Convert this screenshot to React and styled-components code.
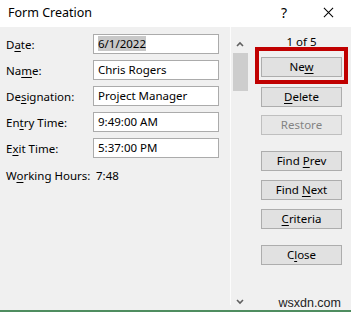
import React from "react";
import styled, { createGlobalStyle } from "styled-components";

const GlobalStyle = createGlobalStyle`
  html, body {
    margin: 0;
    padding: 0;
    background: #f0f0f0;
  }
  body {
    font-family: "Noto Sans", "Open Sans", sans-serif;
    color: #000;
  }
`;

const fields = [
  { label: ["D", "a", "te:"], value: "6/1/2022", selected: true },
  { label: ["Na", "m", "e:"], value: "Chris Rogers" },
  { label: ["De", "s", "ignation:"], value: "Project Manager" },
  { label: ["En", "t", "ry Time:"], value: "9:49:00 AM" },
  { label: ["E", "x", "it Time:"], value: "5:37:00 PM" },
];

const buttons = [
  { text: ["", "D", "elete"], top: 3 },
  { text: ["Restore", "", ""], top: 8, disabled: true },
  { text: ["Find ", "P", "rev"], top: 16 },
  { text: ["Find ", "N", "ext"], top: 9 },
  { text: ["", "C", "riteria"], top: 9 },
  { text: ["C", "l", "ose"], top: 16 },
];

// label with one underlined access key
const Keyed = ({ parts }) => (
  <>
    {parts[0]}
    {parts[1] && <u>{parts[1]}</u>}
    {parts[2]}
  </>
);

const App = () => {
  return (
    <>
      <GlobalStyle />
      <Window>
        <TitleBar>
          <Title>Form Creation</Title>
          <Help>?</Help>
          <CloseIcon viewBox="0 0 12 12">
            <path d="M1 1 L11 11 M11 1 L1 11" stroke="#000" strokeWidth="1.1" />
          </CloseIcon>
        </TitleBar>
        <Body>
          <FormPanel>
            {fields.map((f) => (
              <Row key={f.value}>
                <Label>
                  <Keyed parts={f.label} />
                </Label>
                <Field>
                  {f.selected ? <Selected>{f.value}</Selected> : f.value}
                </Field>
              </Row>
            ))}
            <HoursRow>
              <Label>
                W<u>o</u>rking Hours:
              </Label>
              <Hours>7:48</Hours>
            </HoursRow>
          </FormPanel>
          <ScrollBar>
            <Arrow viewBox="0 0 8 6">
              <path d="M1 5 L4 2 L7 5" stroke="#606060" strokeWidth="1.6" fill="none" />
            </Arrow>
            <Thumb />
            <Track />
            <Arrow viewBox="0 0 8 6">
              <path d="M1 1 L4 4 L7 1" stroke="#606060" strokeWidth="1.6" fill="none" />
            </Arrow>
          </ScrollBar>
          <ButtonPanel>
            <Counter>1 of 5</Counter>
            <Highlight>
              <Button>
                Ne<u>w</u>
              </Button>
            </Highlight>
            {buttons.map((b) => (
              <Button key={b.text.join("")} $top={b.top} disabled={b.disabled}>
                <Keyed parts={b.text} />
              </Button>
            ))}
            <Watermark>wsxdn.com</Watermark>
          </ButtonPanel>
        </Body>
        <BottomLine />
      </Window>
    </>
  );
};

const Window = styled.div`
  width: 351px;
  height: 312px;
  display: flex;
  flex-direction: column;
  background: #f0f0f0;
  overflow: hidden;
`;

const TitleBar = styled.div`
  height: 27px;
  flex-shrink: 0;
  background: #fff;
  display: flex;
  align-items: center;
  padding: 0 0 3px 8px;
  box-sizing: border-box;
`;

const Title = styled.div`
  flex: 1;
  font-size: 12.5px;
`;

const Help = styled.div`
  font-size: 14px;
  width: 14px;
  margin-right: 28px;
`;

const CloseIcon = styled.svg`
  width: 11px;
  height: 11px;
  margin-right: 17px;
`;

const Body = styled.div`
  flex: 1;
  display: flex;
  min-height: 0;
`;

const FormPanel = styled.div`
  width: 230px;
  flex-shrink: 0;
  padding: 7px 0 0 6px;
  box-sizing: border-box;
  display: flex;
  flex-direction: column;
  gap: 6px;
`;

const Row = styled.div`
  display: flex;
  align-items: center;
  height: 20px;
`;

const Label = styled.div`
  width: 87px;
  font-size: 11.5px;
  white-space: nowrap;
  u {
    text-underline-offset: 2px;
  }
`;

const Field = styled.div`
  width: 126px;
  height: 20px;
  box-sizing: border-box;
  border: 1px solid #ababab;
  background: #fff;
  font-size: 11.5px;
  line-height: 18px;
  padding-left: 4px;
  white-space: nowrap;
`;

const Selected = styled.span`
  background: #c8c8c8;
`;

const HoursRow = styled(Row)`
  margin-top: 1px;
`;

const Hours = styled.div`
  font-size: 11.5px;
  margin-left: 3px;
`;

const ScrollBar = styled.div`
  width: 19px;
  flex-shrink: 0;
  margin-bottom: 5px;
  border-left: 1px solid #fcfcfc;
  display: flex;
  flex-direction: column;
  align-items: center;
  padding-top: 14px;
  box-sizing: border-box;
`;

const Arrow = styled.svg`
  width: 8px;
  height: 6px;
  margin-left: -1px;
`;

const Thumb = styled.div`
  width: 15px;
  height: 38px;
  margin-top: 6px;
  background: #cdcdcd;
`;

const Track = styled.div`
  flex: 1;
`;

const ButtonPanel = styled.div`
  position: relative;
  flex: 1;
  display: flex;
  flex-direction: column;
  align-items: flex-start;
  padding: 8px 0 0 12px;
`;

const Counter = styled.div`
  width: 81px;
  text-align: center;
  font-size: 11.5px;
  line-height: 14px;
`;

const Highlight = styled.div`
  margin: -2px 0 0 -6px;
  border: 4px solid #c00000;
  padding: 3px 2px;
`;

const Button = styled.button`
  width: 81px;
  height: 20px;
  margin-top: ${(p) => p.$top || 0}px;
  padding: 0;
  box-sizing: border-box;
  border: 1px solid #adadad;
  background: #e1e1e1;
  font-family: "Noto Sans", "Open Sans", sans-serif;
  font-size: 11.5px;
  line-height: 18px;
  color: ${(p) => (p.disabled ? "#838383" : "#000")};
  border-color: ${(p) => (p.disabled ? "#bfbfbf" : "#adadad")};
  background: ${(p) => (p.disabled ? "#e6e6e6" : "#e1e1e1")};
  u {
    text-underline-offset: 2px;
  }
`;

const Watermark = styled.div`
  position: absolute;
  right: 10px;
  bottom: 0px;
  font-family: "Liberation Sans", Arial, sans-serif;
  font-size: 12.5px;
  color: #222;
`;

const BottomLine = styled.div`
  height: 2px;
  flex-shrink: 0;
  background: #4f8d60;
`;

export default App;
